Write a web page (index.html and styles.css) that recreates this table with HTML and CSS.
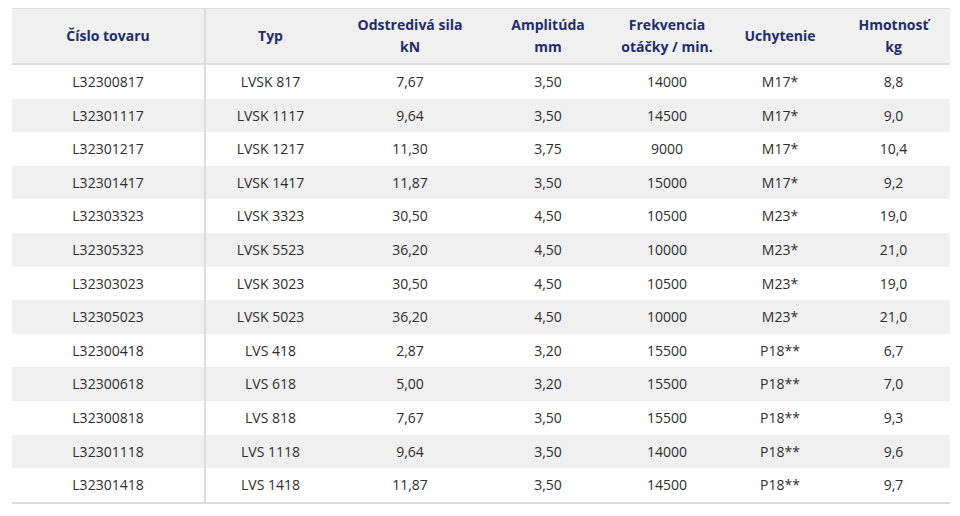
FILE: index.html
```html
<!DOCTYPE html>
<html lang="sk">
<head>
<meta charset="utf-8">
<link rel="stylesheet" href="styles.css">
</head>
<body>
<div class="wrap">
<table class="spec">
<colgroup>
<col class="c1"><col class="c2"><col class="c3"><col class="c4"><col class="c5"><col class="c6"><col class="c7">
</colgroup>
<thead>
<tr>
<th class="first">Číslo tovaru</th>
<th>Typ</th>
<th>Odstredivá sila<br>kN</th>
<th>Amplitúda<br>mm</th>
<th>Frekvencia<br>otáčky / min.</th>
<th>Uchytenie</th>
<th>Hmotnosť<br>kg</th>
</tr>
</thead>
<tbody>
<tr><td class="first">L32300817</td><td>LVSK 817</td><td>7,67</td><td>3,50</td><td>14000</td><td>M17*</td><td>8,8</td></tr>
<tr><td class="first">L32301117</td><td>LVSK 1117</td><td>9,64</td><td>3,50</td><td>14500</td><td>M17*</td><td>9,0</td></tr>
<tr><td class="first">L32301217</td><td>LVSK 1217</td><td>11,30</td><td>3,75</td><td>9000</td><td>M17*</td><td>10,4</td></tr>
<tr><td class="first">L32301417</td><td>LVSK 1417</td><td>11,87</td><td>3,50</td><td>15000</td><td>M17*</td><td>9,2</td></tr>
<tr><td class="first">L32303323</td><td>LVSK 3323</td><td>30,50</td><td>4,50</td><td>10500</td><td>M23*</td><td>19,0</td></tr>
<tr><td class="first">L32305323</td><td>LVSK 5523</td><td>36,20</td><td>4,50</td><td>10000</td><td>M23*</td><td>21,0</td></tr>
<tr><td class="first">L32303023</td><td>LVSK 3023</td><td>30,50</td><td>4,50</td><td>10500</td><td>M23*</td><td>19,0</td></tr>
<tr><td class="first">L32305023</td><td>LVSK 5023</td><td>36,20</td><td>4,50</td><td>10000</td><td>M23*</td><td>21,0</td></tr>
<tr><td class="first">L32300418</td><td>LVS 418</td><td>2,87</td><td>3,20</td><td>15500</td><td>P18**</td><td>6,7</td></tr>
<tr><td class="first">L32300618</td><td>LVS 618</td><td>5,00</td><td>3,20</td><td>15500</td><td>P18**</td><td>7,0</td></tr>
<tr><td class="first">L32300818</td><td>LVS 818</td><td>7,67</td><td>3,50</td><td>15500</td><td>P18**</td><td>9,3</td></tr>
<tr><td class="first">L32301118</td><td>LVS 1118</td><td>9,64</td><td>3,50</td><td>14000</td><td>P18**</td><td>9,6</td></tr>
<tr><td class="first">L32301418</td><td>LVS 1418</td><td>11,87</td><td>3,50</td><td>14500</td><td>P18**</td><td>9,7</td></tr>
</tbody>
</table>
</div>
</body>
</html>
```
FILE: styles.css
```css
html, body {
  margin: 0;
  padding: 0;
  background: #ffffff;
}
body {
  font-family: "Open Sans", "Noto Sans", "Liberation Sans", sans-serif;
  font-size: 14px;
  color: #2e2e2e;
}
.wrap {
  padding: 8px 10px 0 12px;
}
.spec {
  width: 938px;
  border-collapse: collapse;
  table-layout: fixed;
  border-top: 1px solid #dcdcdc;
  border-bottom: 2px solid #dcdcdc;
}
.c1 { width: 193px; }
.c2 { width: 130px; }
.c3 { width: 150px; }
.c4 { width: 126px; }
.c5 { width: 112px; }
.c6 { width: 114px; }
.c7 { width: 113px; }
.spec th {
  background: #f0f0f0;
  color: #1f2d6c;
  font-weight: 700;
  font-size: 14px;
  line-height: 22px;
  height: 54px;
  padding: 0 4px;
  text-align: center;
  vertical-align: middle;
  border-bottom: 2px solid #dcdcdc;
}
.spec td {
  text-align: center;
  line-height: 19.6px;
  padding: 7px 4px;
  vertical-align: middle;
}
.spec .first {
  border-right: 2px solid #dcdcdc;
}
.spec tbody tr:nth-child(even) td {
  background: #f0f0f0;
}
```
